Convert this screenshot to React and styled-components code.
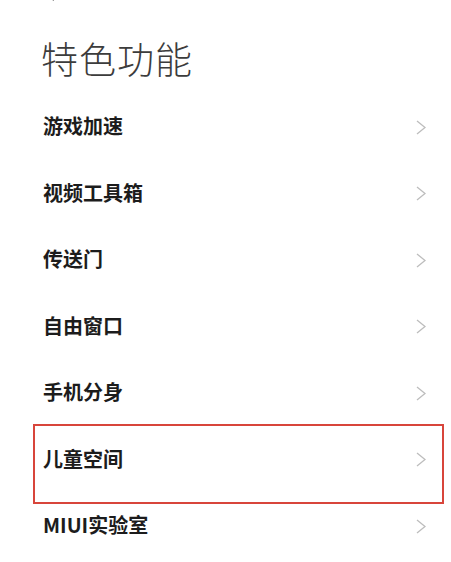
import React from "react";
import styled, { createGlobalStyle } from "styled-components";

const Global = createGlobalStyle`
  html, body { margin: 0; padding: 0; background: #ffffff; }
  body { font-family: "Noto Sans CJK SC", "Noto Sans", sans-serif; }
`;

const Page = styled.div`
  width: 451px;
  height: 562px;
  overflow: hidden;
  position: relative;
  background: #fff;
  display: flex;
  flex-direction: column;
`;

const TopBar = styled.div`
  height: 4px;
  padding-left: 47px;
  overflow: hidden;
  display: flex;
  align-items: flex-end;
`;

const Title = styled.h1`
  margin: 32px 0 0 0;
  padding-left: 41px;
  font-size: 37px;
  line-height: 44px;
  height: 44px;
  font-weight: 300;
  color: #3c3c3c;
  letter-spacing: 1px;
`;

const List = styled.ul`
  list-style: none;
  margin: 14.75px 0 0 0;
  padding: 0;
`;

const Row = styled.li`
  position: relative;
  height: 66.5px;
  display: flex;
  align-items: center;
  justify-content: space-between;
  padding: 0 25px 0 43px;
  box-sizing: border-box;

  ${(p) =>
    p.$highlight &&
    `
    &::after {
      content: "";
      position: absolute;
      left: 33px;
      right: 7px;
      top: -3px;
      bottom: -10px;
      border: 2px solid #d8453b;
      pointer-events: none;
    }
  `}
`;

const Label = styled.span`
  font-size: 20px;
  font-weight: 700;
  color: #1c1c1c;
  line-height: 1;
  margin-top: -4px;
`;

const Chevron = () => (
  <svg width="10" height="15" viewBox="0 0 10 15" style={{ marginTop: -2 }}>
    <path d="M1 1 L9 7.5 L1 14" fill="none" stroke="#bdbdbd" strokeWidth="1.3" />
  </svg>
);

const items = ["游戏加速", "视频工具箱", "传送门", "自由窗口", "手机分身", "儿童空间", "MIUI实验室"];

export default function App() {
  return (
    <Page>
      <Global />
      <TopBar>
        <svg width="10" height="14" viewBox="0 0 10 14">
          <path d="M9 0 L2 6 L7 10" fill="none" stroke="#333" strokeWidth="2" />
        </svg>
      </TopBar>
      <Title>特色功能</Title>
      <List>
        {items.map((t) => (
          <Row key={t} $highlight={t === "儿童空间"}>
            <Label>{t}</Label>
            <Chevron />
          </Row>
        ))}
      </List>
    </Page>
  );
}
